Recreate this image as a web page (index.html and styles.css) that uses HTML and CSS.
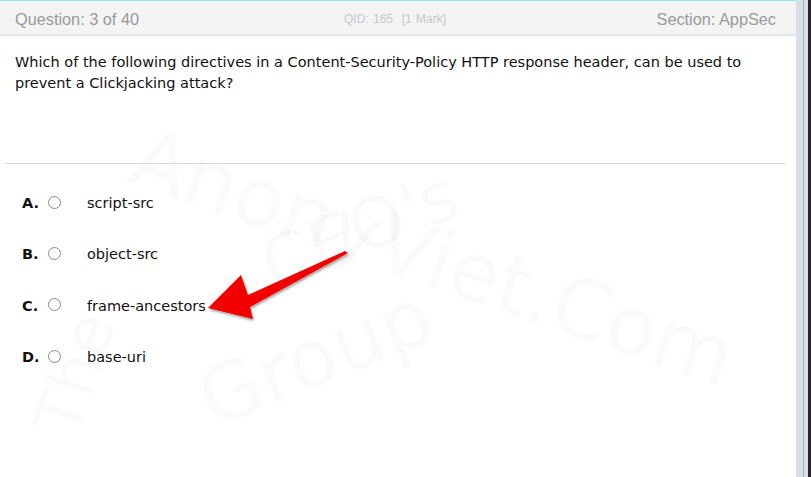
FILE: index.html
```html
<!DOCTYPE html>
<html>
<head>
<meta charset="utf-8">
<link rel="stylesheet" href="styles.css">
</head>
<body>
<div class="screen">
  <div class="page">
    <div class="topline"></div>
    <header class="qhead">
      <span class="qnum">Question: 3 of 40</span>
      <span class="qid">QID: 165&nbsp;&nbsp;[1 Mark]</span>
      <span class="section">Section: AppSec</span>
    </header>
    <div class="question">Which of the following directives in a Content-Security-Policy HTTP response header, can be used to prevent a Clickjacking attack?</div>
    <div class="divider"></div>
    <ul class="options">
      <li class="opt"><span class="letter">A.</span><span class="radio"></span><span class="otext">script-src</span></li>
      <li class="opt"><span class="letter">B.</span><span class="radio"></span><span class="otext">object-src</span></li>
      <li class="opt"><span class="letter">C.</span><span class="radio"></span><span class="otext">frame-ancestors</span></li>
      <li class="opt"><span class="letter">D.</span><span class="radio"></span><span class="otext">base-uri</span></li>
    </ul>
    <div class="watermark wm1">AnonyViet.Com</div>
    <div class="watermark wm2">The</div>
    <div class="watermark wm3">CEO's</div>
    <div class="watermark wm4">Group</div>
    <svg class="arrow" width="160" height="80" viewBox="0 0 160 80">
      <defs>
        <filter id="sh" x="-20%" y="-20%" width="140%" height="140%">
          <feDropShadow dx="1" dy="2" stdDeviation="1.2" flood-color="#000" flood-opacity="0.35"/>
        </filter>
      </defs>
      <polygon filter="url(#sh)" fill="#f40000" points="143,4 46,48 39,28 6,61 51,72 48,60 146,6"/>
    </svg>
  </div>
  <div class="scrollbar"><div class="track-line"></div></div>
  <div class="dark"></div>
</div>
</body>
</html>
```
FILE: styles.css
```css
html, body {
  margin: 0;
  padding: 0;
  background: #fff;
}
.screen {
  display: flex;
  width: 811px;
  height: 477px;
  overflow: hidden;
}
.page {
  position: relative;
  width: 796px;
  height: 477px;
  background: #fff;
  overflow: hidden;
}
.topline {
  height: 1px;
  background: #8fe2f4;
}
.qhead {
  display: flex;
  align-items: center;
  box-sizing: border-box;
  height: 35px;
  padding: 3px 20px 0 15px;
  background: #f4f4f4;
  border-bottom: 2px solid #e3e7eb;
  font-family: "Liberation Sans", Arial, sans-serif;
  color: #9a9a9a;
}
.qnum {
  font-size: 16.3px;
  width: 329px;
}
.qid {
  font-size: 12px;
  color: #c8c8c8;
  flex: 1;
  word-spacing: 1px;
}
.section {
  font-size: 16.3px;
}
.question {
  font-family: "DejaVu Sans", Verdana, sans-serif;
  font-size: 14.5px;
  line-height: 21px;
  color: #111;
  padding: 16px 40px 0 15px;
  height: 111px;
}
.divider {
  margin: 0 10px 0 5px;
  height: 1px;
  background: #dcdcdc;
}
.options {
  list-style: none;
  margin: 0;
  padding: 29px 0 0 22px;
  font-family: "DejaVu Sans", Verdana, sans-serif;
  font-size: 14.5px;
  color: #111;
}
.opt {
  display: flex;
  align-items: center;
  height: 20px;
  margin-bottom: 31.4px;
}
.letter {
  font-weight: bold;
  width: 26px;
}
.radio {
  box-sizing: border-box;
  width: 13px;
  height: 13px;
  border: 1px solid #8a8a8a;
  border-radius: 50%;
  margin-right: 26px;
  margin-top: -2px;
}
.watermark {
  position: absolute;
  font-family: "DejaVu Sans", Verdana, sans-serif;
  color: rgba(0,0,0,0.02);
  white-space: nowrap;
  pointer-events: none;
  transform-origin: left top;
}
.wm1 {
  left: 150px;
  top: 110px;
  font-size: 82px;
  transform: rotate(19deg);
}
.wm2 {
  left: 20px;
  top: 420px;
  font-size: 66px;
  transform: rotate(-72deg);
}
.wm3 {
  left: 250px;
  top: 230px;
  font-size: 70px;
  transform: rotate(-22deg);
}
.wm4 {
  left: 185px;
  top: 360px;
  font-size: 80px;
  transform: rotate(-22deg);
}
.arrow {
  position: absolute;
  left: 202px;
  top: 247px;
}
.scrollbar {
  position: relative;
  width: 12px;
  height: 477px;
  background: #d9e0e5;
}
.track-line {
  position: absolute;
  left: 7px;
  top: 0;
  width: 1px;
  height: 477px;
  background: #aab2b8;
}
.dark {
  width: 3px;
  height: 477px;
  background: #2c1f2e;
}
```
